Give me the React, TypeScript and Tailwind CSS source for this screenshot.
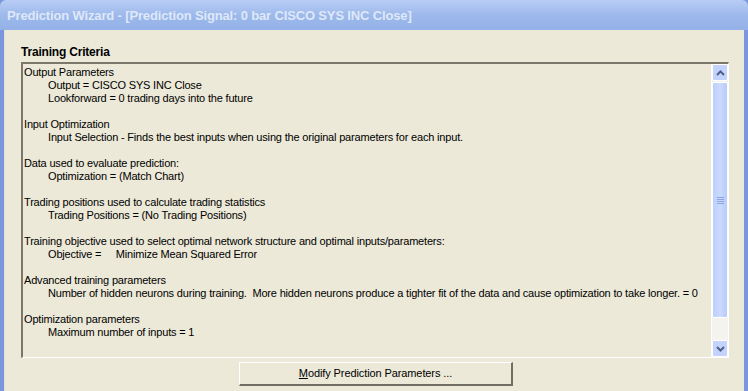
import React from 'react';

const lines: { text: string; indent?: boolean }[] = [
  { text: 'Output Parameters' },
  { text: 'Output = CISCO SYS INC Close', indent: true },
  { text: 'Lookforward = 0 trading days into the future', indent: true },
  { text: '' },
  { text: 'Input Optimization' },
  { text: 'Input Selection - Finds the best inputs when using the original parameters for each input.', indent: true },
  { text: '' },
  { text: 'Data used to evaluate prediction:' },
  { text: 'Optimization = (Match Chart)', indent: true },
  { text: '' },
  { text: 'Trading positions used to calculate trading statistics' },
  { text: 'Trading Positions = (No Trading Positions)', indent: true },
  { text: '' },
  { text: 'Training objective used to select optimal network structure and optimal inputs/parameters:' },
  { text: 'Objective =     Minimize Mean Squared Error', indent: true },
  { text: '' },
  { text: 'Advanced training parameters' },
  {
    text: 'Number of hidden neurons during training.  More hidden neurons produce a tighter fit of the data and cause optimization to take longer. = 0',
    indent: true,
  },
  { text: '' },
  { text: 'Optimization parameters' },
  { text: 'Maximum number of inputs = 1', indent: true },
];

const ScrollBar: React.FC = () => {
  return (
    <div className="flex flex-col w-[17px] bg-[#f4f3ee] border-l border-[#fdfdfa]">
      {/* up arrow */}
      <div className="h-[17px] rounded-[2px] border border-white bg-[#c3d3fd] flex items-center justify-center">
        <svg width="9" height="6" viewBox="0 0 9 6">
          <path d="M1 5 L4.5 1.5 L8 5" stroke="#4d6185" strokeWidth="2" fill="none" />
        </svg>
      </div>
      {/* thumb */}
      <div className="h-[236px] mt-[1px] rounded-[2px] border border-white bg-gradient-to-r from-[#bccffc] via-[#cbdafd] to-[#b8cbf9] flex items-center justify-center">
        <div className="flex flex-col gap-[1px]">
          <div className="w-[7px] h-[1px] bg-[#8ca5e0]" />
          <div className="w-[7px] h-[1px] bg-[#8ca5e0]" />
          <div className="w-[7px] h-[1px] bg-[#8ca5e0]" />
          <div className="w-[7px] h-[1px] bg-[#8ca5e0]" />
        </div>
      </div>
      <div className="flex-1" />
      {/* down arrow */}
      <div className="h-[17px] rounded-[2px] border border-white bg-[#c3d3fd] flex items-center justify-center">
        <svg width="9" height="6" viewBox="0 0 9 6">
          <path d="M1 1 L4.5 4.5 L8 1" stroke="#4d6185" strokeWidth="2" fill="none" />
        </svg>
      </div>
    </div>
  );
};

const App: React.FC = () => {
  return (
    <div className="w-[748px] h-[391px] flex flex-col bg-[#7a96df] overflow-hidden" style={{ fontFamily: '"Liberation Sans", Arial, sans-serif' }}>
      {/* Title bar */}
      <div className="h-[30px] shrink-0 flex items-center pl-[7px] pt-[2px] bg-gradient-to-b from-[#b9cdf5] via-[#9db9eb] to-[#94b1e8] rounded-t-[6px]">
        <span className="text-[13px] font-bold text-[#dfe8f8] tracking-[-0.15px]">
          Prediction Wizard - [Prediction Signal: 0 bar CISCO SYS INC Close]
        </span>
      </div>

      {/* Window body */}
      <div className="flex-1 mx-[4px] bg-[#ece9d8] border-l border-[#e4e1d0] flex flex-col pl-[16px] pr-[15px]">
        <div className="pt-[14px] text-[12px] font-bold text-black leading-[16px] tracking-[-0.2px]">Training Criteria</div>

        {/* Text box */}
        <div className="mt-[2px] h-[296px] flex border-t-2 border-l-2 border-t-[#7b786b] border-l-[#7b786b] border-r border-b border-r-white border-b-white">
          <div className="flex-1 pl-[1px] pt-[2px] text-[11px] leading-[13px] text-black">
            {lines.map((l, i) => (
              <div key={i} className={`h-[13px] whitespace-pre tracking-[-0.18px] ${l.indent ? 'pl-[24px]' : ''}`}>
                {l.text}
              </div>
            ))}
          </div>
          <ScrollBar />
        </div>

        {/* Button */}
        <div className="flex justify-center pt-[4px] pl-[2px]">
          <button className="w-[274px] h-[24px] bg-[#ece9d8] border-t border-l border-white border-r-2 border-b-2 border-r-[#716f64] border-b-[#716f64] text-[11px] tracking-[-0.1px] text-black">
            <span className="underline">M</span>odify Prediction Parameters ...
          </button>
        </div>
      </div>
    </div>
  );
};

export default App;
